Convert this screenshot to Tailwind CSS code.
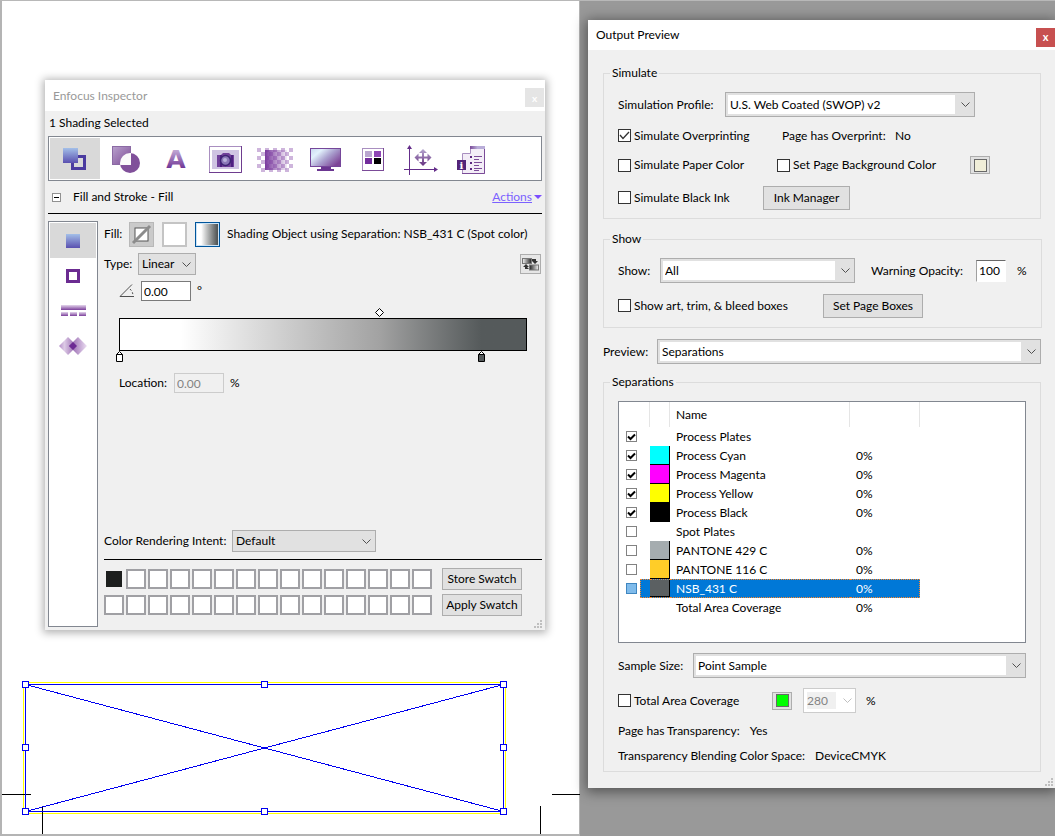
<!DOCTYPE html>
<html lang="en">
<head>
  <meta charset="UTF-8">
  <meta name="viewport" content="width=device-width, initial-scale=1.0">
  <title>Output Preview</title>
  <script src="https://cdn.jsdelivr.net/npm/@tailwindcss/browser@4"></script>
</head>
<body class="bg-[#999999] text-black text-[12px] leading-4">
  <main class="relative h-screen min-h-[836px] overflow-hidden border-t border-[#b8b8b8]">

    <!-- Document page -->
    <section class="relative h-full w-[55%] border-y-2 border-l-2 border-r border-t-0 border-[#b4b4b4] bg-white" aria-label="Document">
      <svg class="absolute bottom-0 left-0" width="578" height="164" viewBox="2 670 578 164" fill="none" shape-rendering="crispEdges">
        <rect x="23.5" y="682.5" width="482" height="131" stroke="#ffff00"/>
        <path d="M2 794.5h29M552 794.5h28M42.5 806v28M540.5 806v28" stroke="#000"/>
        <path d="M25.500 684.500h478v127h-478zM25.500 684.500l478 127M503.500 684.500l-478 127" stroke="#0000f0"/>
        <g fill="#fff" stroke="#0000f0">
          <rect x="22.500" y="681.500" width="6" height="6"/><rect x="261.500" y="681.500" width="6" height="6"/><rect x="500.500" y="681.500" width="6" height="6"/>
          <rect x="22.500" y="744.500" width="6" height="6"/><rect x="500.500" y="744.500" width="6" height="6"/>
          <rect x="22.500" y="808.500" width="6" height="6"/><rect x="261.500" y="808.500" width="6" height="6"/><rect x="500.500" y="808.500" width="6" height="6"/>
        </g>
      </svg>
    </section>

    <!-- Enfocus Inspector -->
    <section class="absolute left-[45px] top-[79px] flex h-[550px] w-[500px] flex-col bg-[#f0f0f0] font-['Lato',sans-serif] shadow-[0_1px_8px_2px_rgba(0,0,0,0.3)]">
      <header class="flex h-[31px] items-center justify-between bg-white pl-2">
        <h1 class="text-[#999999]">Enfocus Inspector</h1>
        <button class="mr-px mt-1 size-[19px] bg-[#e5e5e5] text-[10px] font-bold leading-3 text-white" aria-label="Close">x</button>
      </header>
      <p class="px-1 py-1">1 Shading Selected</p>

      <nav class="mx-[3px] mt-px flex h-[45px] border border-[#828790] bg-white p-px" aria-label="Categories">
        <button class="w-[50px] bg-[#d9d9d9]" aria-label="Fill and Stroke">
          <svg width="50" height="40" viewBox="0 0 50 40">
            <defs><linearGradient id="blue" x2="0" y2="1"><stop stop-color="#a3bfe8"/><stop offset="1" stop-color="#5a50b0"/></linearGradient></defs>
            <rect x="22.500" y="17.500" width="12" height="12" fill="none" stroke="#4b3ba0" stroke-width="3"/>
            <rect x="13" y="9" width="15" height="15" fill="url(#blue)"/>
          </svg>
        </button>
        <button class="w-[50px]" aria-label="Shape">
          <svg width="50" height="40" viewBox="0 0 50 40">
            <defs>
              <linearGradient id="shp" x2="1" y2="1"><stop stop-color="#b9a2cd"/><stop offset="1" stop-color="#7c4a96"/></linearGradient>
              <clipPath id="sq"><rect x="12" y="7" width="19" height="19"/></clipPath>
            </defs>
            <circle cx="30" cy="24" r="10" fill="#80509a"/>
            <rect x="12.500" y="7.500" width="18" height="18" fill="url(#shp)" stroke="#8b6aa4"/>
            <circle cx="30" cy="24" r="10" fill="#fafafa" clip-path="url(#sq)"/>
          </svg>
        </button>
        <button class="w-[50px]" aria-label="Text">
          <svg width="50" height="40" viewBox="0 0 50 40">
            <defs><linearGradient id="txt" x2="0" y2="1"><stop offset=".2" stop-color="#bfa5d2"/><stop offset=".8" stop-color="#6f3596"/></linearGradient></defs>
            <text x="26" y="29" text-anchor="middle" font-family="DejaVu Sans" font-weight="bold" font-size="25" fill="url(#txt)">A</text>
          </svg>
        </button>
        <button class="w-[50px]" aria-label="Image">
          <svg width="50" height="40" viewBox="0 0 50 40">
            <rect x="9.500" y="7.500" width="32" height="26" fill="#fff" stroke="#a98fc0"/>
            <path d="M9 33.500h32.500V7" fill="none" stroke="#6e3d8f"/>
            <rect x="12" y="11" width="27" height="19" fill="#cfc4e2"/>
            <path d="M17 16h4l2-2h6l2 2h3v12H17z" fill="#70409a"/>
            <path d="M20 16h2v12h-2zM31 16h2v12h-2z" fill="#4d2080"/>
            <circle cx="25.500" cy="21.500" r="5" fill="#8b78b8" stroke="#3d2473" stroke-width="1.500"/>
            <circle cx="25" cy="21" r="2" fill="#b9b4dc"/>
          </svg>
        </button>
        <button class="w-[50px]" aria-label="Transparency">
          <svg width="50" height="40" viewBox="0 0 50 40" shape-rendering="crispEdges">
            <defs>
              <pattern id="chk" x="7" y="9" width="8" height="8" patternUnits="userSpaceOnUse"><path d="M0 0h4v4H0zM4 4h4v4H4z" fill="#ceb5dc"/></pattern>
              <linearGradient id="fade"><stop stop-color="#7a3a9e"/><stop offset="1" stop-color="#7a3a9e" stop-opacity=".1"/></linearGradient>
            </defs>
            <rect x="7" y="9" width="36" height="24" fill="url(#chk)"/>
            <rect x="15" y="11" width="22" height="20" fill="url(#fade)"/>
          </svg>
        </button>
        <button class="w-[50px]" aria-label="Screen">
          <svg width="50" height="40" viewBox="0 0 50 40">
            <defs><linearGradient id="scr" x2="1" y2=".7"><stop offset=".05" stop-color="#cfdcf2"/><stop offset=".28" stop-color="#e2f1fc"/><stop offset=".6" stop-color="#aaa0ce"/><stop offset="1" stop-color="#7d4497"/></linearGradient></defs>
            <rect x="10.500" y="9.500" width="30" height="18" fill="url(#scr)" stroke="#75469a"/>
            <path d="M21 28h10v2h3v2H17v-2h4z" fill="#6b3691"/>
          </svg>
        </button>
        <button class="w-[50px]" aria-label="Swatches">
          <svg width="50" height="40" viewBox="0 0 50 40" shape-rendering="crispEdges">
            <rect x="12.500" y="9.500" width="21" height="22" fill="#fff" stroke="#a98fc0"/>
            <path d="M12 31.500h21.500V9" fill="none" stroke="#7b4b98"/>
            <rect x="15" y="12" width="7" height="6" fill="#b9a5cf"/><rect x="24" y="12" width="7" height="6" fill="#8f46b5"/>
            <rect x="15" y="19" width="7" height="6" fill="#722c9c"/><rect x="24" y="19" width="7" height="6" fill="#000"/>
          </svg>
        </button>
        <button class="w-[50px]" aria-label="Position">
          <svg width="50" height="40" viewBox="0 0 50 40">
            <defs><linearGradient id="mov" x2="0" y2="1"><stop stop-color="#b6a8d0"/><stop offset="1" stop-color="#663080"/></linearGradient></defs>
            <path d="M9.500 36V8M4 30.500h32" stroke="#642d8a" fill="none"/>
            <path d="M9.500 6l2.500 4h-5zM38 30.500l-4-2.500v5z" fill="#642d8a"/>
            <path d="M23 10l4 4h-3v3.500h3.500v-3l4 4-4 4v-3H24V23h3l-4 4-4-4h3v-3.500h-3.500v3l-4-4 4-4v3H22V14h-3z" fill="url(#mov)"/>
          </svg>
        </button>
        <button class="w-[50px]" aria-label="Document info">
          <svg width="50" height="40" viewBox="0 0 50 40">
            <defs><linearGradient id="dtop"><stop stop-color="#7b4b98"/><stop offset=".5" stop-color="#b9add8"/><stop offset="1" stop-color="#b9add8"/></linearGradient></defs>
            <path d="M20.500 7.500h14v27h-22V14.500h8z" fill="#f3edf7" stroke="#a98fc0"/>
            <path d="M34.500 7v27.500H12" fill="none" stroke="#7b4b98"/>
            <rect x="20" y="7" width="15" height="3" fill="url(#dtop)"/>
            <path d="M24 17.500h8M24 20.500h5M24 23.500h8M24 26.500h5M24 29.500h8M24 31.500h5" stroke="#7b4b98"/>
            <path d="M20 17h2v2h-2zM20 23h2v2h-2zM20 29h2v2h-2z" fill="#5d2782"/>
            <rect x="7" y="21" width="9" height="10" fill="#532478"/>
            <text x="11.500" y="30" text-anchor="middle" font-family="DejaVu Serif" font-weight="bold" font-size="10" fill="#fff">i</text>
          </svg>
        </button>
      </nav>

      <div class="mx-[3px] flex h-[33px] items-center border-b border-black pl-1">
        <button class="flex size-[9px] items-center justify-center border border-[#919191] bg-white" aria-label="Collapse"><span class="h-px w-[5px] bg-black"></span></button>
        <h2 class="ml-3">Fill and Stroke - Fill</h2>
        <a href="#" class="ml-auto flex items-center text-[#7b61ff] underline">Actions
          <svg class="ml-[2px]" width="8" height="4" viewBox="0 0 8 4"><path d="M0 0h8L4 4z" fill="#7b4dff"/></svg>
        </a>
      </div>

      <div class="mx-[3px] mb-[3px] mt-[7px] flex min-h-0 flex-1 gap-[6px]">
        <nav class="flex w-[50px] shrink-0 flex-col border border-[#828790] bg-white p-px" aria-label="Fill and Stroke">
          <button class="flex h-[35px] items-center justify-center bg-[#d9d9d9]" aria-label="Fill">
            <svg width="14" height="14"><rect width="14" height="14" fill="url(#blue)"/></svg>
          </button>
          <button class="flex h-[35px] items-center justify-center" aria-label="Stroke">
            <svg width="14" height="14"><rect x="1.500" y="1.500" width="11" height="11" fill="#fff" stroke="#6b2b91" stroke-width="3"/></svg>
          </button>
          <button class="flex h-[35px] items-center justify-center" aria-label="Dash">
            <svg width="25" height="11" viewBox="0 0 25 11">
              <defs><linearGradient id="dash" x2="0" y2="1"><stop stop-color="#e4d6ec"/><stop offset="1" stop-color="#7b3f9b"/></linearGradient></defs>
              <g fill="url(#dash)"><rect width="25" height="5"/><rect y="7" width="7" height="4"/><rect x="9" y="7" width="7" height="4"/><rect x="18" y="7" width="7" height="4"/></g>
            </svg>
          </button>
          <button class="flex h-[35px] items-center justify-center" aria-label="Overprint">
            <svg width="28" height="18" viewBox="0 0 28 18">
              <defs>
                <linearGradient id="ovl"><stop stop-color="#b48cc8"/><stop offset=".3" stop-color="#ddcbe6"/><stop offset="1" stop-color="#8a55a6"/></linearGradient>
                <linearGradient id="ovr"><stop stop-color="#8a55a6"/><stop offset="1" stop-color="#ecdff2"/></linearGradient>
              </defs>
              <path d="M0 9l9-9 9 9-9 9z" fill="url(#ovl)"/><path d="M10 9l9-9 9 9-9 9z" fill="url(#ovr)"/><path d="M10 9l4-4 4 4-4 4z" fill="#6d2a94"/>
            </svg>
          </button>
        </nav>

        <div class="flex min-w-0 flex-1 flex-col">
          <div class="flex h-[26px] items-center">
            <span class="w-[25px]">Fill:</span>
            <div class="flex gap-2">
              <button class="flex size-[25px] items-center justify-center border border-[#b8b8b8] bg-[#cacaca]" aria-label="No fill">
                <svg width="21" height="21" viewBox="0 0 21 21"><rect x="4" y="4" width="13" height="13" fill="#fff" stroke="#555"/><path d="M2 19L19 2" stroke="#8c8c8c" stroke-width="3"/></svg>
              </button>
              <button class="size-[25px] border-2 border-[#c4c4c4] bg-white" aria-label="Solid fill"></button>
              <button class="size-[25px] border border-[#00559b] bg-[#cce4f7] p-px" aria-label="Shading fill"><span class="block h-full bg-linear-to-r from-white from-20% to-[#4c5050]"></span></button>
            </div>
            <span class="ml-[7px] whitespace-nowrap">Shading Object using Separation: NSB_431 C (Spot color)</span>
          </div>

          <div class="mt-1 flex h-[26px] items-center">
            <label for="type" class="w-[34px]">Type:</label>
            <div class="relative h-[22px] w-[58px] border border-[#adadad] bg-[#e1e1e1]">
              <select id="type" class="size-full appearance-none pl-[3px]"><option>Linear</option></select>
              <svg class="pointer-events-none absolute right-1 top-2" width="9" height="6" viewBox="0 0 9 6" fill="none"><path d="M.5.5l4 4 4-4" stroke="#505050"/></svg>
            </div>
            <button class="ml-auto mr-px flex h-5 w-[21px] items-center justify-center border border-[#adadad] bg-[#e6e6e6]" aria-label="Reverse">
              <svg width="17" height="14" viewBox="0 0 17 14">
                <defs><linearGradient id="bw"><stop stop-color="#f4f4f4"/><stop offset="1" stop-color="#222"/></linearGradient><linearGradient id="wb"><stop stop-color="#222"/><stop offset="1" stop-color="#f4f4f4"/></linearGradient></defs>
                <rect x=".5" y="1.500" width="9" height="5" fill="url(#bw)" stroke="#777"/><rect x="7.500" y="8" width="9" height="5" fill="url(#wb)" stroke="#777"/>
                <path d="M10 2h4v2h2l-3 3-3-3h2V4h-2zM7 12H3v-2H1l3-3 3 3H5z" fill="#333"/>
              </svg>
            </button>
          </div>

          <div class="mt-px flex h-[26px] items-center pl-[15px]">
            <svg width="15" height="14" viewBox="0 0 15 14" fill="none"><path d="M13 .5L1 12.500h14" stroke="#505050"/><path d="M11 5c2 2 3 4 3 7" stroke="#505050" stroke-dasharray="2 2"/></svg>
            <input class="ml-[7px] h-5 w-[50px] border border-[#7a7a7a] bg-white pl-[2px]" value="0.00" aria-label="Angle">
            <span class="ml-[6px]">°</span>
          </div>

          <!-- gradient ramp with its stops -->
          <div class="relative ml-[15px] mr-[15px] mt-[14px] h-[33px] border border-black bg-linear-to-r from-white from-15% via-[#a2a2a2] via-64% to-[#555a5b] to-89%">
            <svg class="absolute -top-[11px] left-[64%] -ml-[5px]" width="9" height="9" viewBox="0 0 9 9"><path d="M4.500.5l4 4-4 4-4-4z" fill="#fff" stroke="#000"/></svg>
            <svg class="absolute -bottom-3 -left-1" width="7" height="11" viewBox="0 0 7 11"><path d="M.5 3.500h6v7h-6zM.5 3.500l3-3 3 3" fill="#fff" stroke="#000"/></svg>
            <svg class="absolute -bottom-3 left-[89%] -ml-[3px]" width="7" height="11" viewBox="0 0 7 11"><path d="M.5 3.500l3-3 3 3" fill="#fff" stroke="#000"/><path d="M.5 3.500h6v7h-6z" fill="#555a5b" stroke="#000"/></svg>
          </div>

          <div class="mt-5 flex h-6 items-center pl-[15px]">
            <label for="location" class="w-[55px]">Location:</label>
            <input id="location" class="h-5 w-[50px] border border-[#cccccc] pl-[2px] text-[#838383]" value="0.00" disabled>
            <span class="ml-[6px]">%</span>
          </div>

          <div class="mt-auto flex h-6 items-center">
            <label for="intent" class="w-32 whitespace-nowrap">Color Rendering Intent:</label>
            <div class="relative h-[22px] w-[144px] border border-[#adadad] bg-[#e1e1e1]">
              <select id="intent" class="size-full appearance-none pl-[3px]"><option>Default</option></select>
              <svg class="pointer-events-none absolute right-1 top-2" width="9" height="6" viewBox="0 0 9 6" fill="none"><path d="M.5.5l4 4 4-4" stroke="#505050"/></svg>
            </div>
          </div>
          <div class="mb-[11px] mt-[6px] flex gap-[10px] border-t border-black pt-2">
            <div id="swatches" class="grid grid-cols-[repeat(15,20px)] gap-x-[2px] gap-y-[6px] py-px"></div>
            <div class="flex w-20 flex-col gap-1">
              <button class="h-[22px] whitespace-nowrap border border-[#adadad] bg-[#e1e1e1]">Store Swatch</button>
              <button class="h-[22px] whitespace-nowrap border border-[#adadad] bg-[#e1e1e1]">Apply Swatch</button>
            </div>
          </div>
        </div>
      </div>
      <svg class="absolute bottom-[2px] right-[3px]" width="8" height="8" viewBox="0 0 8 8" fill="#bfbfbf"><path d="M6 0h2v2H6zM3 3h2v2H3zM6 3h2v2H6zM0 6h2v2H0zM3 6h2v2H3zM6 6h2v2H6z"/></svg>
    </section>

    <!-- Output Preview -->
    <section class="absolute left-[588px] right-0 top-[19px] flex h-[768px] flex-col bg-[#f0f0f0] font-['Lato',sans-serif] shadow-[0_2px_12px_2px_rgba(0,0,0,0.45)]">
      <header class="flex h-[30px] items-center justify-between bg-white pl-2">
        <h1>Output Preview</h1>
        <button class="mt-1 size-[19px] bg-[#c75050] text-[11px] font-bold leading-3 text-white" aria-label="Close">x</button>
      </header>

      <div class="flex flex-1 flex-col pb-4 pl-[15px] pr-[14px] pt-[15px]">
        <fieldset class="border border-[#dcdcdc] px-[14px] pb-px pt-[9px]">
          <legend class="-ml-2 px-[2px]">Simulate</legend>
          <div class="flex h-[29px] items-center">
            <label for="profile" class="w-[107px]">Simulation Profile:</label>
            <div class="flex h-[25px] w-[250px] items-center border border-[#adadad] bg-[#e1e1e1] p-[2px]">
              <select id="profile" class="h-full flex-1 appearance-none bg-white pl-[2px]"><option>U.S. Web Coated (SWOP) v2</option></select>
              <svg class="pointer-events-none ml-[6px] mr-[2px]" width="9" height="6" viewBox="0 0 9 6" fill="none"><path d="M.5.5l4 4 4-4" stroke="#505050"/></svg>
            </div>
          </div>
          <div class="flex h-[33px] items-center">
            <label class="flex w-[164px] items-center gap-[3px]">
              <span class="grid place-items-center"><input type="checkbox" checked class="peer col-start-1 row-start-1 size-[13px] appearance-none border border-[#333] bg-white"><svg class="pointer-events-none col-start-1 row-start-1 hidden peer-checked:block" width="11" height="9" viewBox="0 0 11 9" fill="none"><path d="M1 4l3 3.500L10 1" stroke="#333" stroke-width="1.300"/></svg></span>
              Simulate Overprinting
            </label>
            <span class="w-[113px]">Page has Overprint:</span><span>No</span>
          </div>
          <div class="flex h-[26px] items-center">
            <label class="flex w-[159px] items-center gap-[3px]"><input type="checkbox" class="size-[13px] appearance-none border border-[#333] bg-white">Simulate Paper Color</label>
            <label class="flex w-[193px] items-center gap-[3px]"><input type="checkbox" class="size-[13px] appearance-none border border-[#333] bg-white">Set Page Background Color</label>
            <button class="flex h-[18px] w-5 items-center justify-center border border-[#adadad] bg-[#e1e1e1]" aria-label="Background color"><span class="size-[13px] border border-[#696969] bg-[#f0eed8]"></span></button>
          </div>
          <div class="flex h-[39px] items-center">
            <label class="flex w-[145px] items-center gap-[3px]"><input type="checkbox" class="size-[13px] appearance-none border border-[#333] bg-white">Simulate Black Ink</label>
            <button class="h-6 w-[87px] border border-[#adadad] bg-[#e1e1e1]">Ink Manager</button>
          </div>
        </fieldset>

        <fieldset class="mt-3 border border-[#dcdcdc] px-[14px] pb-[3px] pt-[7px]">
          <legend class="-ml-2 px-[2px]">Show</legend>
          <div class="flex h-[33px] items-center">
            <label for="show" class="w-[42px]">Show:</label>
            <div class="flex h-[25px] w-[195px] items-center border border-[#adadad] bg-[#e1e1e1] p-[2px]">
              <select id="show" class="h-full flex-1 appearance-none bg-white pl-[2px]"><option>All</option></select>
              <svg class="pointer-events-none ml-[6px] mr-[2px]" width="9" height="6" viewBox="0 0 9 6" fill="none"><path d="M.5.5l4 4 4-4" stroke="#505050"/></svg>
            </div>
            <label for="opacity" class="ml-4 w-[105px]">Warning Opacity:</label>
            <input id="opacity" class="h-[22px] w-[30px] border border-b-white border-l-[#a0a0a0] border-r-white border-t-[#696969] bg-white pl-[2px]" value="100">
            <span class="ml-[11px]">%</span>
          </div>
          <div class="flex h-[37px] items-center">
            <label class="flex w-[205px] items-center gap-[3px]"><input type="checkbox" class="size-[13px] appearance-none border border-[#333] bg-white">Show art, trim, &amp; bleed boxes</label>
            <button class="h-6 w-[100px] border border-[#adadad] bg-[#e1e1e1]">Set Page Boxes</button>
          </div>
        </fieldset>

        <div class="mt-[11px] flex h-[25px] items-center">
          <label for="preview" class="w-[54px]">Preview:</label>
          <div class="flex h-[25px] flex-1 items-center border border-[#adadad] bg-[#e1e1e1] p-[2px]">
            <select id="preview" class="h-full flex-1 appearance-none bg-white pl-[2px]"><option>Separations</option></select>
            <svg class="pointer-events-none ml-[6px] mr-[2px]" width="9" height="6" viewBox="0 0 9 6" fill="none"><path d="M.5.5l4 4 4-4" stroke="#505050"/></svg>
          </div>
        </div>

        <fieldset class="mt-[10px] flex-1 border border-[#dcdcdc] px-[14px] pt-[11px]">
          <legend class="-ml-2 px-[2px]">Separations</legend>
          <div class="h-[242px] border border-[#828790] bg-white">
            <table class="table-fixed border-separate border-spacing-0 text-left">
              <thead>
                <tr class="h-[25px]">
                  <th class="w-[21px]"></th>
                  <th class="w-[10px] border-r border-[#e5e5e5]"></th>
                  <th class="w-[20px] border-r border-[#e5e5e5]"></th>
                  <th class="w-[180px] border-r border-[#e5e5e5] pl-[6px] font-normal">Name</th>
                  <th class="w-[70px] border-r border-[#e5e5e5]"></th>
                </tr>
              </thead>
              <tbody id="plates"></tbody>
            </table>
          </div>
          <div class="mt-[10px] flex h-[25px] items-center">
            <label for="sample" class="w-[75px]">Sample Size:</label>
            <div class="flex h-[25px] flex-1 items-center border border-[#adadad] bg-[#e1e1e1] p-[2px]">
              <select id="sample" class="h-full flex-1 appearance-none bg-white pl-[2px]"><option>Point Sample</option></select>
              <svg class="pointer-events-none ml-[6px] mr-[2px]" width="9" height="6" viewBox="0 0 9 6" fill="none"><path d="M.5.5l4 4 4-4" stroke="#505050"/></svg>
            </div>
          </div>
          <div class="mt-[10px] flex h-[25px] items-center">
            <label class="flex w-[154px] items-center gap-[3px]"><input type="checkbox" class="size-[13px] appearance-none border border-[#333] bg-white">Total Area Coverage</label>
            <button class="flex h-[18px] w-5 items-center justify-center border border-[#adadad] bg-[#e1e1e1]" aria-label="Coverage color"><span class="size-[13px] border border-[#696969] bg-[#00ff00]"></span></button>
            <div class="ml-[11px] flex h-[25px] w-[53px] items-center border border-[#cccccc] bg-white p-[3px]">
              <select class="h-full w-[29px] appearance-none bg-[#f0f0f0] text-[#838383] opacity-100" aria-label="Coverage limit" disabled><option>280</option></select>
              <svg class="ml-[7px]" width="9" height="6" viewBox="0 0 9 6" fill="none"><path d="M.5.5l4 4 4-4" stroke="#bfbfbf"/></svg>
            </div>
            <span class="ml-[10px]">%</span>
          </div>
          <p class="mt-[10px] flex gap-[10px]"><span>Page has Transparency:</span><span>Yes</span></p>
          <p class="mt-[9px] flex gap-[10px]"><span>Transparency Blending Color Space:</span><span>DeviceCMYK</span></p>
        </fieldset>
      </div>
      <svg class="absolute bottom-[2px] right-[2px]" width="8" height="8" viewBox="0 0 8 8" fill="#bfbfbf"><path d="M6 0h2v2H6zM3 3h2v2H3zM6 3h2v2H6zM0 6h2v2H0zM3 6h2v2H3zM6 6h2v2H6z"/></svg>
    </section>
  </main>

  <script>
    const plates = [
      { name: 'Process Plates', on: true },
      { name: 'Process Cyan', on: true, color: '#00ffff', value: '0%' },
      { name: 'Process Magenta', on: true, color: '#ff00ff', value: '0%' },
      { name: 'Process Yellow', on: true, color: '#ffff00', value: '0%' },
      { name: 'Process Black', on: true, color: '#000000', value: '0%' },
      { name: 'Spot Plates', on: false },
      { name: 'PANTONE 429 C', on: false, color: '#a5acaf', value: '0%' },
      { name: 'PANTONE 116 C', on: false, color: '#ffcd28', value: '0%' },
      { name: 'NSB_431 C', on: false, color: '#5b6062', value: '0%', selected: true },
      { name: 'Total Area Coverage', value: '0%' }
    ];

    document.getElementById('plates').innerHTML = plates.map(p => {
      const line = p.selected ? 'bg-[#0078d7] text-white border-y border-dotted border-[#ff8728]' : '';
      const box = p.selected ? 'border-[#3f86c0] bg-[#7fbbeb]' : 'border-[#828282] bg-white';
      const size = p.selected ? 'h-[17px]' : 'h-[19px]';
      const check = p.on === undefined ? '' : `
        <span class="ml-[7px] grid w-[11px] place-items-center">
          <input type="checkbox" aria-label="${p.name}" ${p.on ? 'checked' : ''} class="peer col-start-1 row-start-1 size-[11px] appearance-none border ${box}">
          <svg class="pointer-events-none col-start-1 row-start-1 hidden peer-checked:block" width="9" height="8" viewBox="0 0 9 8" fill="none"><path d="M1 3.500l2.500 2.500L8 1.500" stroke="#000" stroke-width="2"/></svg>
        </span>`;
      return `
        <tr class="h-[19px]">
          <td class="p-0">${check}</td>
          <td class="p-0 ${line} ${p.selected ? 'border-l' : ''}"></td>
          <td class="p-0 ${line}">${p.color ? `<div class="${size} border-b border-r border-black" style="background:${p.color}"></div>` : ''}</td>
          <td class="py-0 pl-[6px] leading-[17px] ${line}">${p.name}</td>
          <td class="py-0 pl-[6px] leading-[17px] ${line} ${p.selected ? 'border-r' : ''}">${p.value || ''}</td>
        </tr>`;
    }).join('');

    // first swatch is filled, the other 29 are empty
    let cells = '<button class="size-5 border-2 border-[#f0f0f0] bg-[#1d1f1e]" aria-label="Swatch 1"></button>';
    for (let i = 2; i <= 30; i++) {
      cells += `<button class="size-5 border-2 border-[#a0a0a4] bg-white" aria-label="Swatch ${i}"></button>`;
    }
    document.getElementById('swatches').innerHTML = cells;
  </script>
</body>
</html>
